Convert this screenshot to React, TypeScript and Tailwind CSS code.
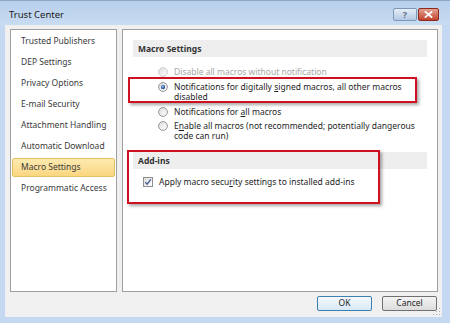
import React from "react";

const navItems = [
  "Trusted Publishers",
  "DEP Settings",
  "Privacy Options",
  "E-mail Security",
  "Attachment Handling",
  "Automatic Download",
  "Macro Settings",
  "Programmatic Access",
];

function Radio({ checked, disabled }: { checked?: boolean; disabled?: boolean }) {
  return (
    <svg width="10" height="10" viewBox="0 0 10 10" className="shrink-0">
      <defs>
        <linearGradient id="rg" x1="0" y1="0" x2="1" y2="1">
          <stop offset="0" stopColor="#dcdcdc" />
          <stop offset="1" stopColor="#ffffff" />
        </linearGradient>
        <radialGradient id="dot" cx="0.4" cy="0.35" r="0.7">
          <stop offset="0" stopColor="#8fb6e8" />
          <stop offset="1" stopColor="#1b3f80" />
        </radialGradient>
      </defs>
      <circle cx="5" cy="5" r="4.4" fill="url(#rg)" stroke={disabled ? "#c8c8c8" : "#8a8a8a"} strokeWidth="0.9" />
      {checked && <circle cx="5" cy="5" r="2.2" fill="url(#dot)" />}
    </svg>
  );
}

export default function App() {
  return (
    <div
      className="w-[450px] h-[323px] flex flex-col bg-[#c4d9f1] border-t border-[#8ea7c4] relative overflow-hidden"
      style={{ fontFamily: '"Noto Sans", "Open Sans", sans-serif' }}
    >
      {/* Title bar */}
      <div className="h-[24px] flex items-start pl-[9px] pr-[11px] bg-gradient-to-b from-[#b8d0ec] to-[#c8dcf2]">
        <span className="text-[9.5px] leading-[12px] mt-[8px] text-[#1a1a1a]">Trust Center</span>
        <div className="ml-auto flex gap-px mt-[7px]">
          <div className="w-[24px] h-[13px] rounded-[2px] border border-[#7d97b8] bg-gradient-to-b from-[#e6eef8] to-[#b4c8e2] flex items-center justify-center">
            <span className="text-[9px] leading-none font-bold text-[#5c6f8a]">?</span>
          </div>
          <div className="w-[21px] h-[13px] rounded-[2px] border border-[#8b2a1d] bg-gradient-to-b from-[#e3a08f] to-[#c2402c] flex items-center justify-center">
            <svg width="9" height="7" viewBox="0 0 9 7">
              <path d="M1.5 1 L7.5 6 M7.5 1 L1.5 6" stroke="#ffffff" strokeWidth="1.8" strokeLinecap="square" />
            </svg>
          </div>
        </div>
      </div>

      {/* Client area */}
      <div className="flex-1 ml-[5px] mr-[8px] mb-[6px] bg-[#f0f0f0] flex flex-col pt-[4px] pl-[5px] pr-[4px] relative">
        <div className="flex gap-[5px] h-[263px]">
          {/* Nav */}
          <div className="w-[107px] h-full bg-white border border-[#a0a0a0] pt-px text-[8.5px] text-[#3a3a3a]">
            {navItems.map((item) => {
              const active = item === "Macro Settings";
              return (
                <div key={item} className="h-[21px] py-px px-px">
                  <div
                    className={
                      active
                        ? "h-[19px] flex items-center pl-[8px] rounded-[2px] border border-[#e3c162] bg-gradient-to-b from-[#fdeab0] to-[#fbd680]"
                        : "h-[19px] flex items-center pl-[9px]"
                    }
                  >
                    {item}
                  </div>
                </div>
              );
            })}
          </div>

          {/* Main panel */}
          <div className="flex-1 h-full bg-white border border-[#a0a0a0] pt-[10px] px-[10px] relative text-[8.5px] leading-[10px] text-[#1e1e1e]">
            <div className="h-[17px] bg-[#eeeeee] flex items-center pl-[5px] font-bold text-[#333333]">
              Macro Settings
            </div>

            <div className="mt-[10px] pl-[25px]">
              <div className="flex items-start gap-[6px]">
                <Radio disabled />
                <span className="text-[#a7a7a7]">Disable all macros without notification</span>
              </div>
              <div className="flex items-start gap-[6px] mt-[5px]">
                <Radio checked />
                <span className="w-[252px]">
                  Notifications for digitally <span className="underline underline-offset-[1px]">s</span>igned macros, all other macros disabled
                </span>
              </div>
              <div className="flex items-start gap-[6px] mt-[5px]">
                <Radio />
                <span>
                  Notifications for <span className="underline underline-offset-[1px]">a</span>ll macros
                </span>
              </div>
              <div className="flex items-start gap-[6px] mt-[4px]">
                <Radio />
                <span className="w-[252px]">
                  E<span className="underline underline-offset-[1px]">n</span>able all macros (not recommended; potentially dangerous code can run)
                </span>
              </div>
            </div>

            <div className="mt-[11px] h-[17px] bg-[#eeeeee] flex items-center pl-[5px] font-bold text-[#333333]">
              Add-ins
            </div>
            <div className="mt-[8px] pl-[10px] flex items-center gap-[6px]">
              <div className="w-[10px] h-[10px] border border-[#8e8f8f] bg-gradient-to-br from-[#dcdcdc] to-[#ffffff] flex items-center justify-center shrink-0">
                <svg width="8" height="8" viewBox="0 0 8 8">
                  <path d="M1.3 4.2 L3.2 6.2 L6.8 1.3" fill="none" stroke="#4b5e96" strokeWidth="1.4" />
                </svg>
              </div>
              <span>
                Apply macro secu<span className="underline underline-offset-[1px]">r</span>ity settings to installed add-ins
              </span>
            </div>

            {/* Annotation boxes */}
            <div className="absolute left-[5px] top-[47px] w-[289px] h-[26px] border-2 border-[#cf1020] shadow-[2px_2px_3px_rgba(0,0,0,0.35)] pointer-events-none" />
            <div className="absolute left-[4px] top-[120px] w-[253px] h-[54px] border-2 border-[#cf1020] shadow-[2px_2px_3px_rgba(0,0,0,0.35)] pointer-events-none" />
          </div>
        </div>

        {/* Buttons */}
        <div className="flex justify-end gap-[10px] mt-[4px] mr-px">
          <div className="w-[55px] h-[15px] rounded-[2px] border border-[#3c7fb1] bg-gradient-to-b from-[#f4f9fd] to-[#d8e9f6] flex items-center justify-center text-[8.5px] text-[#1e1e1e]">
            OK
          </div>
          <div className="w-[55px] h-[15px] rounded-[2px] border border-[#707070] bg-gradient-to-b from-[#f4f4f4] to-[#dcdcdc] flex items-center justify-center text-[8.5px] text-[#1e1e1e]">
            Cancel
          </div>
        </div>

        {/* Resize grip */}
        <svg className="absolute right-[1px] bottom-[1px]" width="8" height="8" viewBox="0 0 8 8">
          <rect x="6" y="0" width="1" height="1" fill="#b0b0b0" />
          <rect x="3" y="3" width="1" height="1" fill="#b0b0b0" />
          <rect x="6" y="3" width="1" height="1" fill="#b0b0b0" />
          <rect x="0" y="6" width="1" height="1" fill="#b0b0b0" />
          <rect x="3" y="6" width="1" height="1" fill="#b0b0b0" />
          <rect x="6" y="6" width="1" height="1" fill="#b0b0b0" />
        </svg>
      </div>
    </div>
  );
}
